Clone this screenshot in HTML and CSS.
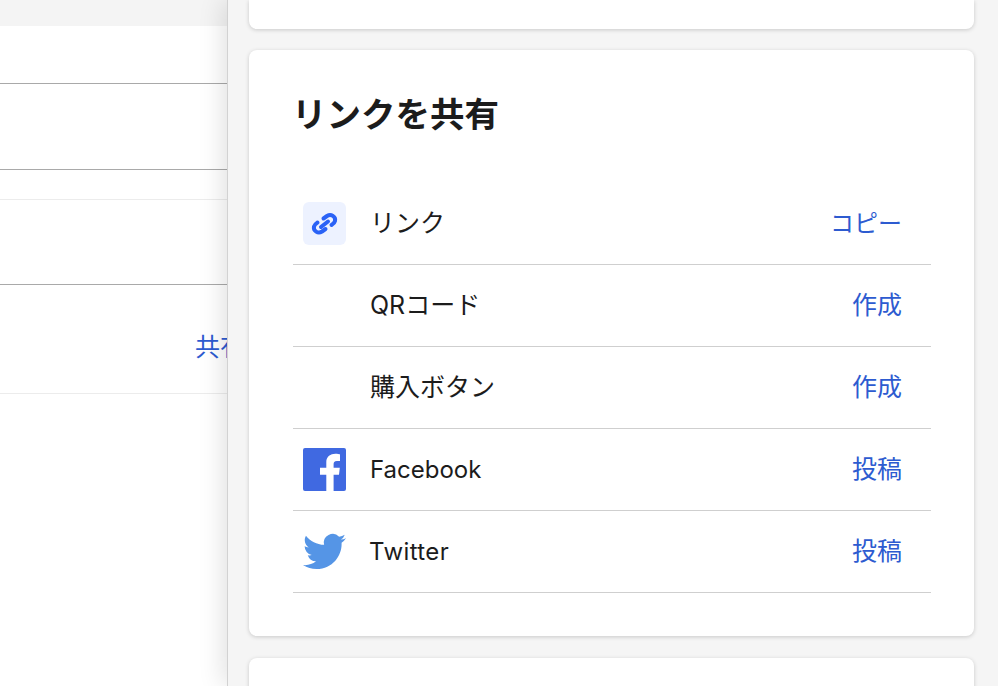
FILE: index.html
```html
<!DOCTYPE html>
<html lang="ja">
<head>
<meta charset="utf-8">
<title>リンクを共有</title>
<link rel="stylesheet" href="styles.css">
</head>
<body>
<div class="page">
  <main class="list">
    <div class="band"></div>
    <div class="row row-a"></div>
    <div class="row row-b"></div>
    <div class="row row-c"></div>
    <div class="row row-d"></div>
    <div class="row row-e"><a class="share">共有</a></div>
  </main>
  <aside class="drawer">
    <section class="card card-top"></section>
    <section class="card card-share">
      <h2 class="title">リンクを共有</h2>
      <ul class="links">
        <li class="item">
          <span class="icon icon-link">
            <svg viewBox="0 0 43 43" width="43" height="43" fill="none" stroke="#2a62f6" stroke-width="4" stroke-linecap="round" stroke-linejoin="round"><path d="M20.500 16.500L24 14C28 11.500 33 14.500 32 19C31.600 21 30 22 28.500 23"/><path d="M22.500 27L19 29.500C15 32 10 29 11 24.500C11.400 22.500 13 21.500 14.500 20.500"/><path d="M18 25L25 19.500"/></svg>
          </span>
          <span class="label label-cjk">リンク</span>
          <a class="action action-copy">コピー</a>
        </li>
        <li class="item">
          <span class="icon"></span>
          <span class="label label-cjk">QRコード</span>
          <a class="action">作成</a>
        </li>
        <li class="item">
          <span class="icon"></span>
          <span class="label label-cjk">購入ボタン</span>
          <a class="action">作成</a>
        </li>
        <li class="item">
          <span class="icon">
            <svg viewBox="0 0 43 43" width="43" height="43"><path fill="#4069e1" fill-rule="evenodd" d="M2 0h39a2 2 0 0 1 2 2v39a2 2 0 0 1-2 2H30.600V26.800h5.400l.8-7h-6.200v-3.600c0-2 .6-3.300 3.400-3.300h3V6.300c-.6-.1-2.500-.6-4.700-.6-4.700 0-9 2.800-9 8.300v5.800H17v7h6.300V43H2a2 2 0 0 1-2-2V2a2 2 0 0 1 2-2z"/></svg>
          </span>
          <span class="label">Facebook</span>
          <a class="action">投稿</a>
        </li>
        <li class="item">
          <span class="icon">
            <svg viewBox="0 0 24 24" width="43" height="43"><path fill="#5595e6" d="M23.953 4.57a10 10 0 0 1-2.825.775 4.958 4.958 0 0 0 2.163-2.723c-.951.555-2.005.959-3.127 1.184a4.92 4.92 0 0 0-8.384 4.482C7.69 8.095 4.067 6.13 1.64 3.162a4.822 4.822 0 0 0-.666 2.475c0 1.71.87 3.213 2.188 4.096a4.904 4.904 0 0 1-2.228-.616v.06a4.923 4.923 0 0 0 3.946 4.827 4.996 4.996 0 0 1-2.212.085 4.936 4.936 0 0 0 4.604 3.417 9.867 9.867 0 0 1-6.102 2.105c-.39 0-.779-.023-1.17-.067a13.995 13.995 0 0 0 7.557 2.209c9.053 0 13.998-7.496 13.998-13.985 0-.21 0-.42-.015-.63A9.935 9.935 0 0 0 24 4.59z"/></svg>
          </span>
          <span class="label label-tw">Twitter</span>
          <a class="action">投稿</a>
        </li>
      </ul>
    </section>
    <section class="card card-next"></section>
  </aside>
</div>
</body>
</html>
```

FILE: styles.css
```css
html, body {
  margin: 0;
  padding: 0;
  height: 100%;
  overflow: hidden;
}

body {
  font-family: Inter, "Noto Sans CJK JP", sans-serif;
  color: #1c1c1c;
  background: #fff;
}

.page {
  display: flex;
  height: 686px;
  overflow: hidden;
}

.list {
  width: 227px;
  flex: none;
  overflow: hidden;
  background: #fff;
}

.band {
  height: 26px;
  background: #f4f4f4;
}

.row {
  box-sizing: border-box;
  border-bottom: 1px solid #a9a9a9;
}

.row-a { height: 58px; }
.row-b { height: 86px; }
.row-c { height: 30px; border-bottom-color: #ececec; }
.row-d { height: 85px; }
.row-e {
  height: 109px;
  border-bottom-color: #ececec;
  padding: 46px 0 0 195px;
  white-space: nowrap;
}

.share {
  font-size: 25px;
  line-height: 32px;
  color: #2d5bd0;
}

.drawer {
  position: relative;
  z-index: 1;
  flex: 1;
  box-sizing: border-box;
  border-left: 1px solid #d2d2d2;
  padding-left: 21px;
  padding-right: 24px;
  background: #f5f5f5;
  box-shadow: -4px 0 24px rgba(0, 0, 0, 0.12);
}

.card {
  background: #fff;
  border-radius: 8px;
  box-shadow: 0 1px 4px rgba(0, 0, 0, 0.18);
}

.card-top {
  height: 29px;
  border-radius: 0 0 8px 8px;
  margin-bottom: 21px;
}

.card-share {
  box-sizing: border-box;
  height: 586px;
  padding: 42px 43px 0 43px;
  margin-bottom: 22px;
}

.card-next {
  height: 60px;
}

.title {
  margin: 0 0 45px;
  font-size: 34.5px;
  line-height: 46px;
  font-weight: 700;
}

.links {
  list-style: none;
  margin: 0 0 0 1px;
  padding: 0;
}

.item {
  box-sizing: border-box;
  display: flex;
  align-items: center;
  height: 82px;
  padding: 0 29px 0 10px;
  border-bottom: 1px solid #cfcfcf;
  font-size: 24px;
}

.icon {
  display: flex;
  align-items: center;
  justify-content: center;
  flex: none;
  width: 43px;
  height: 43px;
  margin-right: 24px;
  border-radius: 6px;
}

.icon-link {
  background: #edf2ff;
}

.label {
  flex: 1;
}

.label-cjk {
  font-size: 25px;
  padding-bottom: 5px;
}

.label-tw {
  letter-spacing: 0.4px;
  margin-left: -1px;
}

.action {
  font-size: 25px;
  padding-bottom: 5px;
  color: #2d5bd0;
}

.action-copy {
  font-size: 24px;
}
```
